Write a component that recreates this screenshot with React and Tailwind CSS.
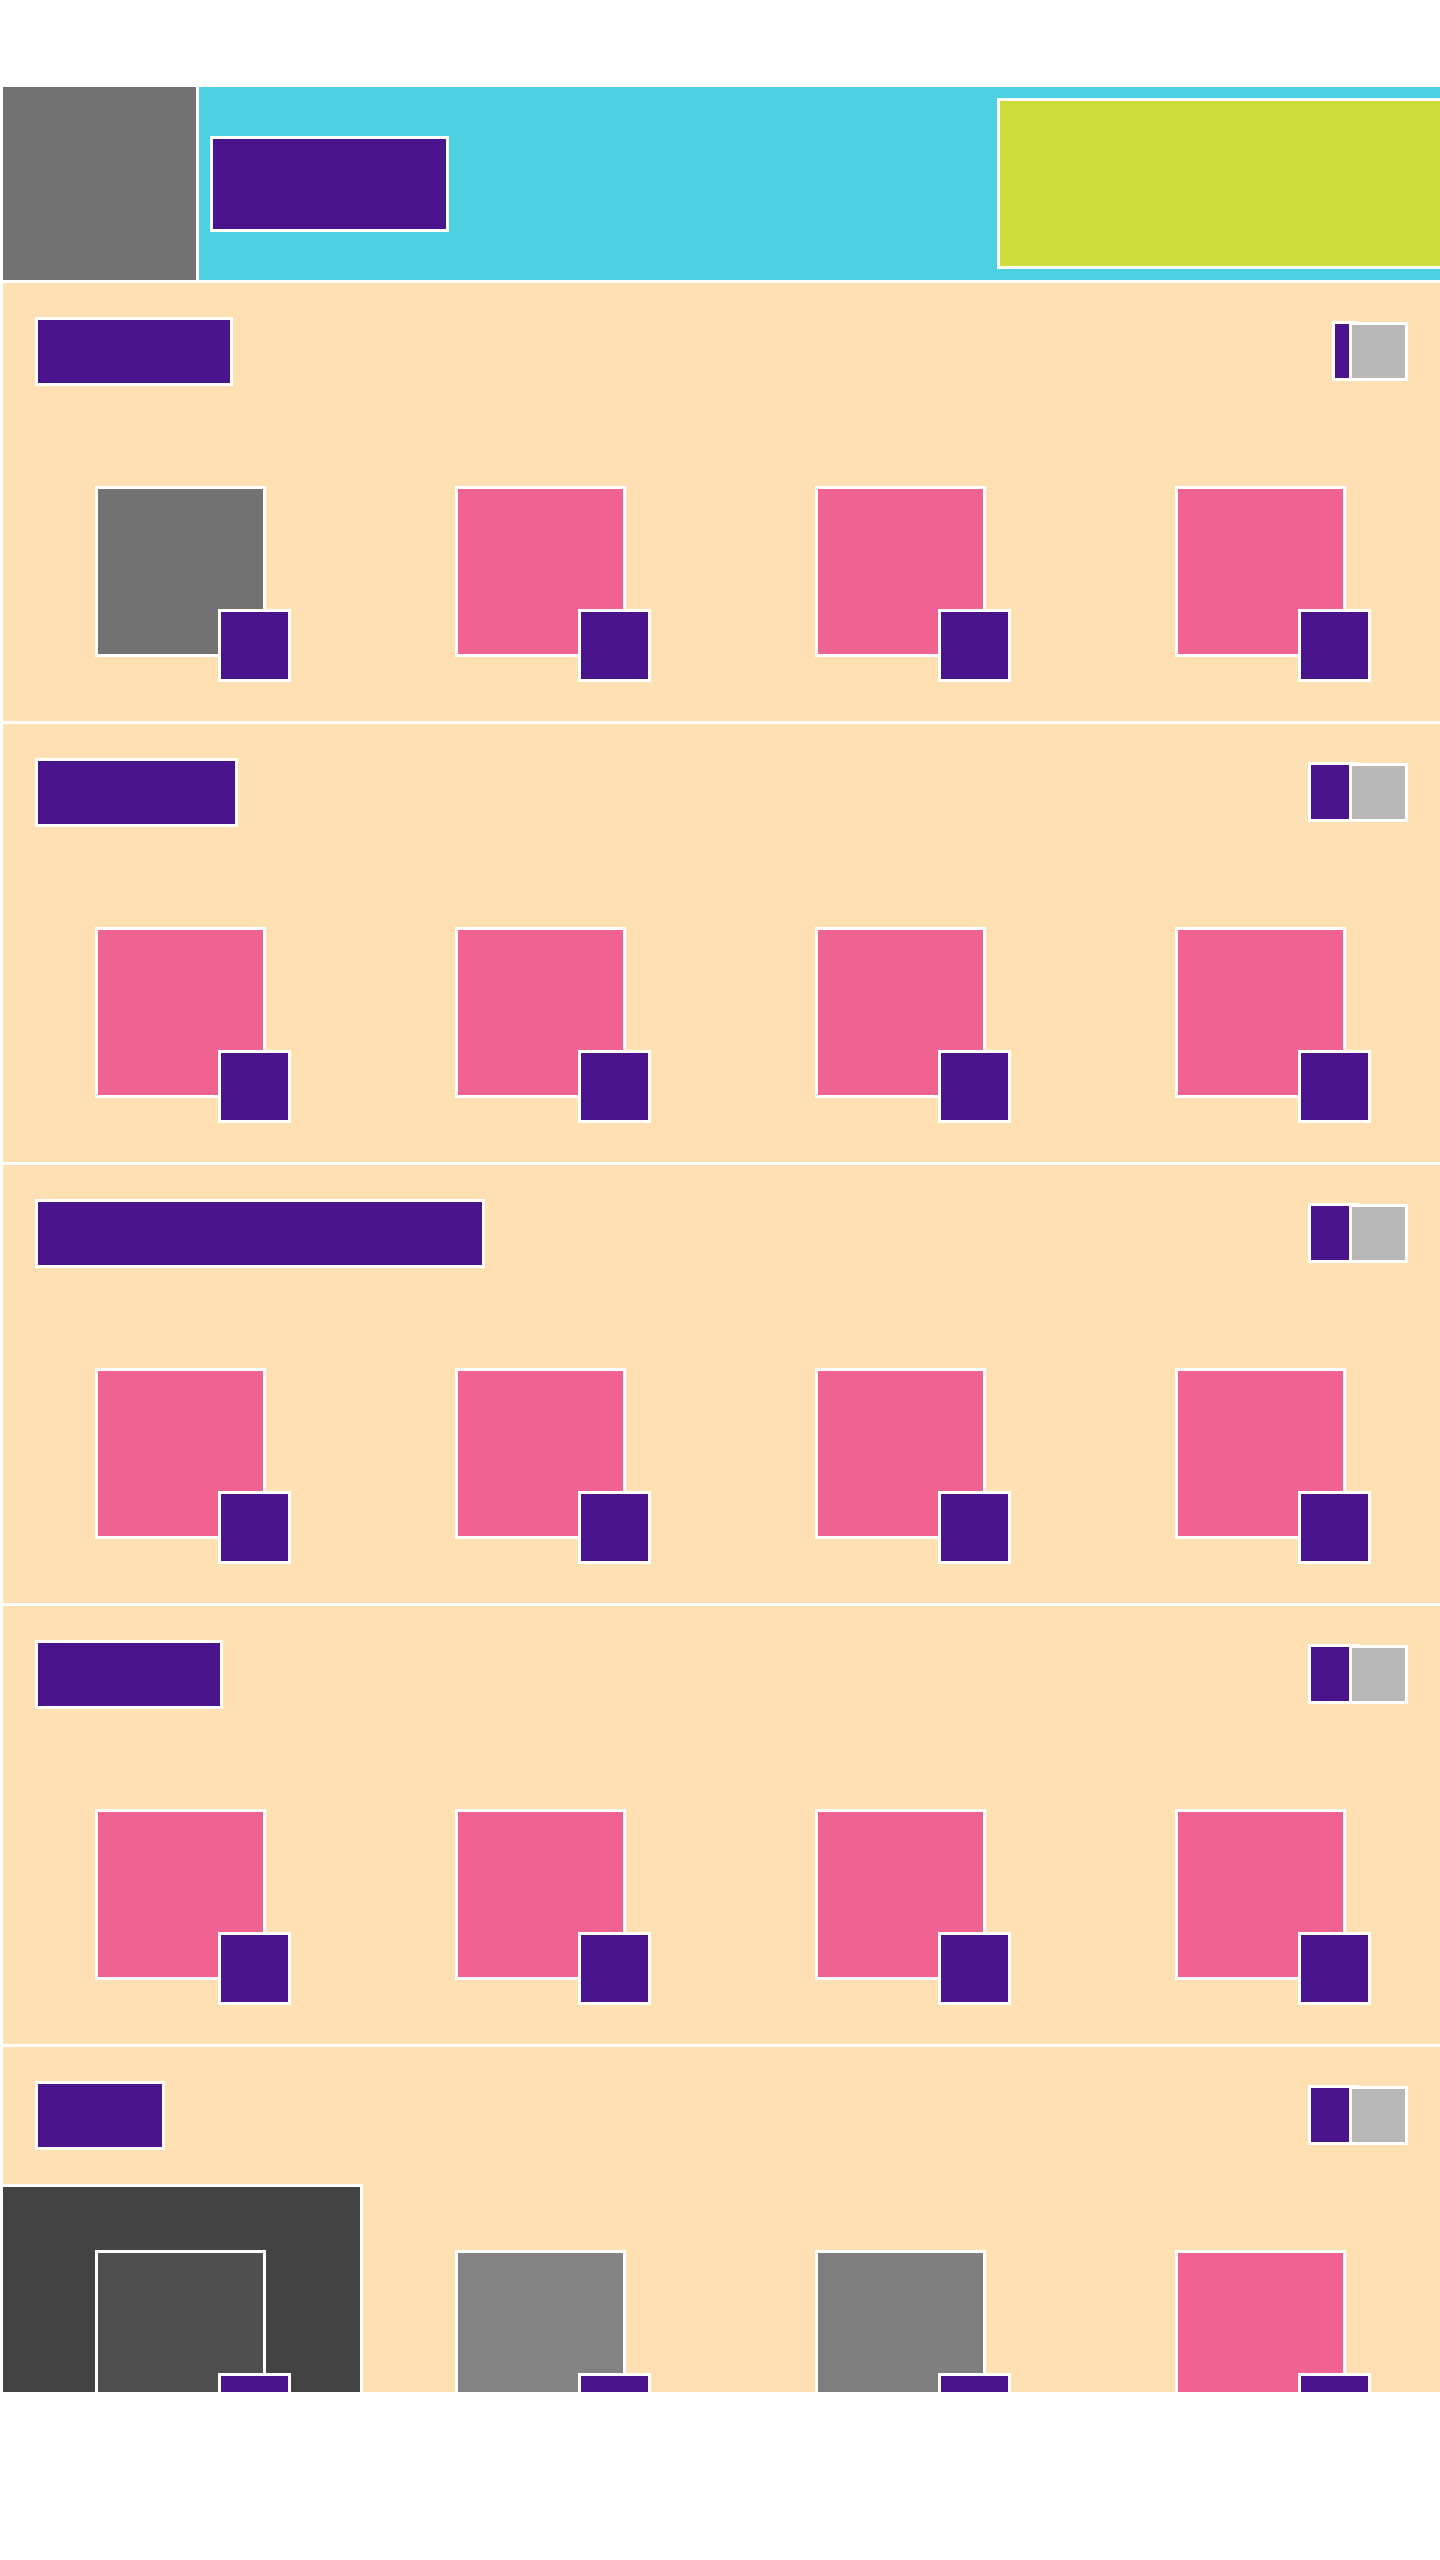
import React from "react";

const sections = [
  { title: "w-[198px]", btn: "w-[27px]", cards: ["bg-[#727272]", "bg-[#f06292]", "bg-[#f06292]", "bg-[#f06292]"] },
  { title: "w-[203px]", btn: "w-[51px]", cards: ["bg-[#f06292]", "bg-[#f06292]", "bg-[#f06292]", "bg-[#f06292]"] },
  { title: "w-[450px]", btn: "w-[51px]", cards: ["bg-[#f06292]", "bg-[#f06292]", "bg-[#f06292]", "bg-[#f06292]"] },
  { title: "w-[188px]", btn: "w-[51px]", cards: ["bg-[#f06292]", "bg-[#f06292]", "bg-[#f06292]", "bg-[#f06292]"] },
  { title: "w-[130px]", btn: "w-[51px]", cards: ["bg-[#4f4f4f]", "bg-[#838383]", "bg-[#7e7e7e]", "bg-[#f06292]"], overlay: true },
];

function Card({ color }) {
  return (
    <div className={`relative z-10 w-[171px] h-[171px] shrink-0 border-[3px] border-white ${color}`}>
      <div className="absolute right-[-28px] bottom-[-28px] w-[73px] h-[73px] border-[3px] border-white bg-[#4a148c]" />
    </div>
  );
}

function Section({ s }) {
  return (
    <div className="relative h-[438px] shrink-0 bg-[#ffe0b2] pt-[34px] px-[32px]">
      {s.overlay && (
        <div className="absolute left-0 top-[137px] w-[360px] h-[400px] bg-[#434343] border-t-[3px] border-r-[3px] border-white" />
      )}
      <div className="relative z-10 flex justify-between items-start h-[69px]">
        <div className={`${s.title} h-[69px] border-[3px] border-white bg-[#4a148c]`} />
        <div className="flex items-end mt-[4px]">
          <div className={`${s.btn} h-[60px] border-[3px] border-white bg-[#4a148c]`} />
          <div className="relative -ml-[10px] w-[59px] h-[59px] border-[3px] border-white bg-[#b8b8b8]" />
        </div>
      </div>
      <div className="flex gap-[189px] mt-[100px] ml-[60px]">
        {s.cards.map((c, i) => (
          <Card key={i} color={c} />
        ))}
      </div>
    </div>
  );
}

export default function App() {
  return (
    <div className="w-[1440px] h-[2392px] overflow-hidden bg-white pt-[87px] pl-[3px]">
      <div className="flex flex-col gap-[3px]">
        <div className="flex h-[193px] gap-[3px]">
          <div className="w-[193px] h-[193px] shrink-0 bg-[#727272]" />
          <div className="flex-1 flex items-center pl-[11px] bg-[#4dd0e1]">
            <div className="w-[239px] h-[96px] shrink-0 border-[3px] border-white bg-[#4a148c]" />
            <div className="ml-[548px] w-[480px] h-[171px] shrink-0 border-[3px] border-white bg-[#cfdd3a]" />
          </div>
        </div>
        {sections.map((s, i) => (
          <Section key={i} s={s} />
        ))}
      </div>
    </div>
  );
}
